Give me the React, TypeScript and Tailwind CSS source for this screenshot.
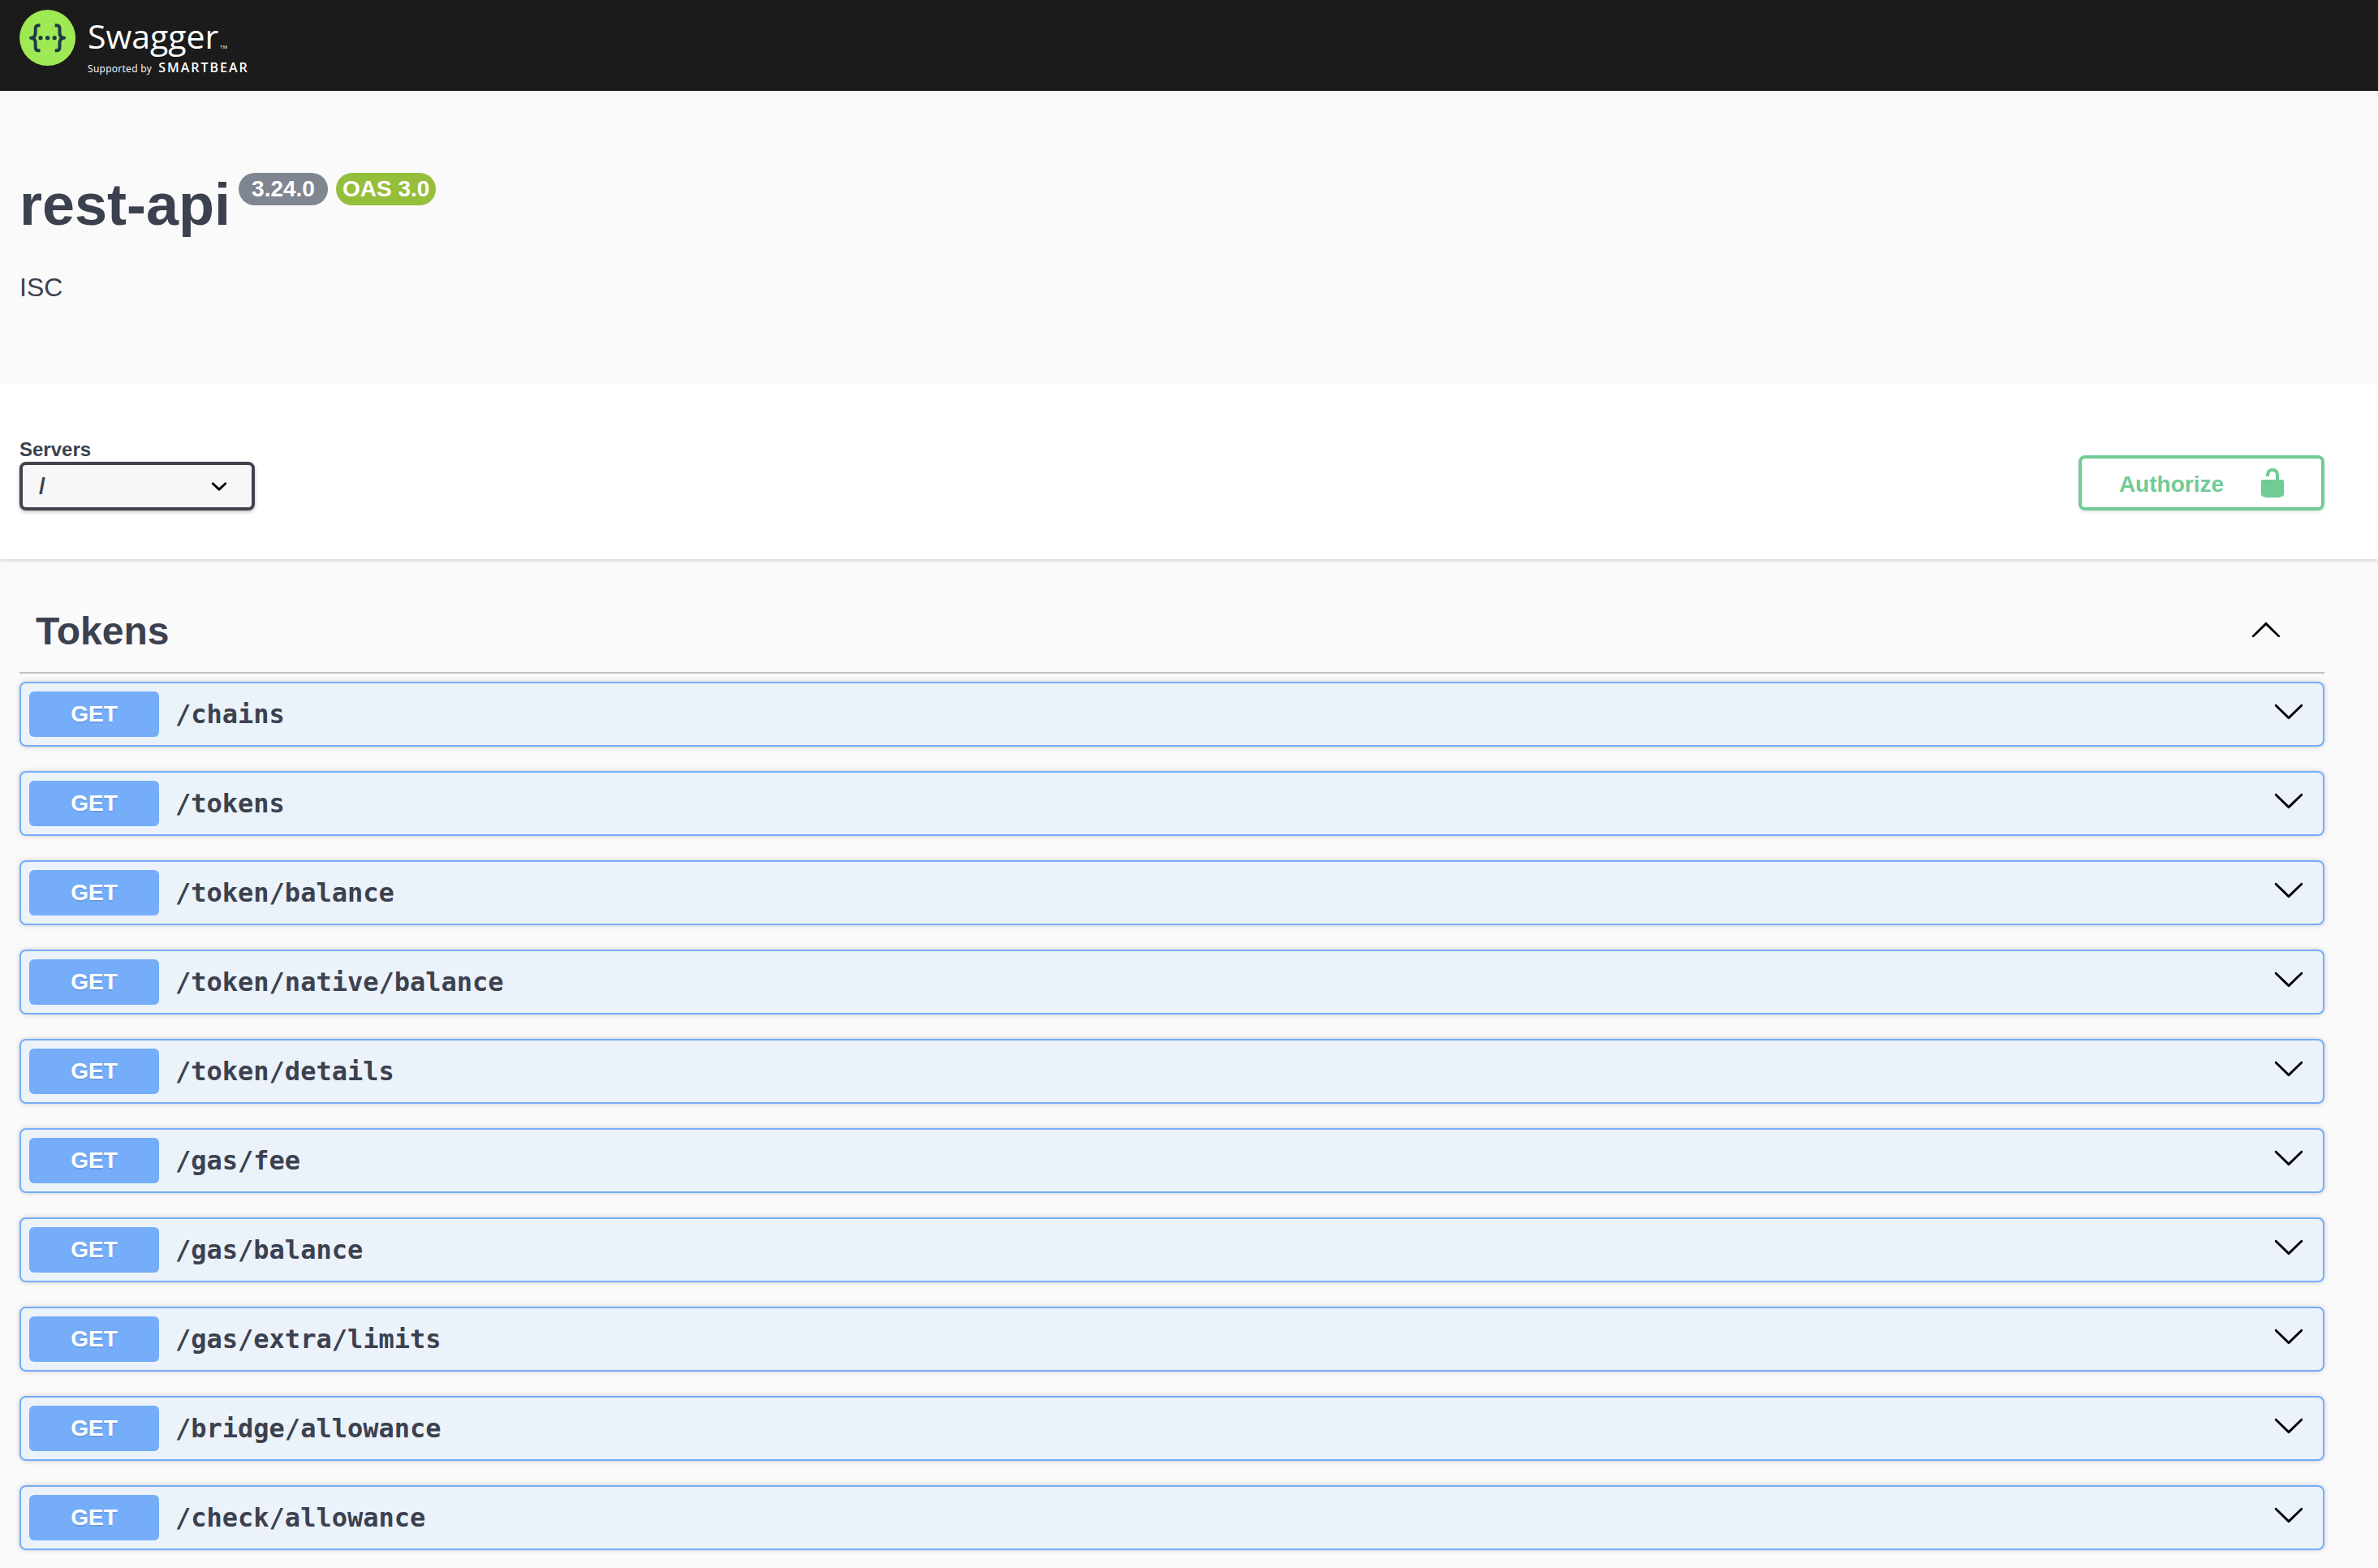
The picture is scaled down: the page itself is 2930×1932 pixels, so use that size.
import { useState } from "react";

type Operation = { method: string; path: string };

const operations: Operation[] = [
  { method: "GET", path: "/chains" },
  { method: "GET", path: "/tokens" },
  { method: "GET", path: "/token/balance" },
  { method: "GET", path: "/token/native/balance" },
  { method: "GET", path: "/token/details" },
  { method: "GET", path: "/gas/fee" },
  { method: "GET", path: "/gas/balance" },
  { method: "GET", path: "/gas/extra/limits" },
  { method: "GET", path: "/bridge/allowance" },
  { method: "GET", path: "/check/allowance" },
];

function ArrowDown({ className }: { className?: string }) {
  return (
    <svg viewBox="0 0 20 20" className={className} aria-hidden="true">
      <path d="M17.418 6.109c.272-.268.709-.268.979 0s.271.701 0 .969l-7.908 7.83c-.27.268-.707.268-.979 0l-7.908-7.83c-.27-.268-.27-.701 0-.969.271-.268.709-.268.979 0L10 13.25l7.418-7.141z" />
    </svg>
  );
}

function ArrowUp({ className }: { className?: string }) {
  return (
    <svg viewBox="0 0 20 20" className={className} aria-hidden="true">
      <path d="M17.418 14.908c.272.268.709.268.979 0s.271-.701 0-.969l-7.908-7.83c-.27-.268-.707-.268-.979 0l-7.908 7.83c-.27.268-.27.701 0 .969.271.268.709.268.979 0L10 7.767l7.418 7.141z" />
    </svg>
  );
}

function UnlockedIcon() {
  return (
    <svg viewBox="0 0 20 20" className="size-10 fill-current" aria-hidden="true">
      <path d="M15.8 8H14V5.6C14 2.703 12.665 1 10 1 7.334 1 6 2.703 6 5.6V6h2v-.801C8 3.754 8.797 3 10 3c1.203 0 2 .754 2 2.199V8H4c-.553 0-1 .646-1 1.199V17c0 .549.428 1.139.951 1.307l1.197.387C5.672 18.861 6.55 19 7.1 19h5.8c.549 0 1.428-.139 1.951-.307l1.196-.387c.524-.167.953-.757.953-1.306V9.199C17 8.646 16.352 8 15.8 8z" />
    </svg>
  );
}

function LogoMark() {
  return (
    <svg viewBox="0 0 70 70" className="size-[70px]" aria-hidden="true">
      <circle cx="34.6" cy="34.6" r="34.5" fill="#9fe954" />
      <g fill="none" stroke="#1f3b4a" strokeWidth="4" strokeLinejoin="round">
        <path d="M25.5 19.2h-2q-3.8 0-3.8 4v5.2q0 6-5.7 6.3q5.7 .3 5.7 6.3v5.2q0 4 3.8 4h2" />
        <path d="M43.7 19.2h2q3.8 0 3.8 4v5.2q0 6 5.7 6.3q-5.7 .3-5.7 6.3v5.2q0 4-3.8 4h-2" />
      </g>
      <g fill="#1f3b4a">
        <circle cx="26" cy="34.7" r="2.6" />
        <circle cx="34.6" cy="34.7" r="2.6" />
        <circle cx="43.2" cy="34.7" r="2.6" />
      </g>
    </svg>
  );
}

function Topbar() {
  return (
    <header className="flex h-28 items-start bg-[#1b1b1b] px-6 pt-3">
      <a
        href="#top"
        aria-label="Swagger"
        className="flex gap-3.5 font-['Open_Sans',sans-serif] text-white"
      >
        <LogoMark />
        <span className="flex flex-col">
          <span className="flex items-end gap-0.5 pt-1 pb-0.5">
            <span className="text-[41px] leading-[56px]">Swagger</span>
            <span className="pb-2.5 text-[6px] leading-[8px]">TM</span>
          </span>
          <span className="flex items-baseline gap-2">
            <span className="text-[12px] leading-[18px] tracking-wide">Supported by</span>
            <span className="text-[16px] leading-[18px] font-semibold tracking-[2px]">
              SMARTBEAR
            </span>
          </span>
        </span>
      </a>
    </header>
  );
}

function ApiInfo() {
  return (
    <section className="pt-[100px] pr-[66px] pb-[98px] pl-6">
      <div className="flex items-start gap-2.5">
        <h1 className="text-[72px] leading-[80px] font-bold">rest-api</h1>
        <span className="mt-px rounded-full bg-[#7f8591] px-4 text-[28px] leading-[40px] font-bold text-white">
          3.24.0
        </span>
        <span className="mt-px rounded-full bg-[#95be3b] px-2 text-[28px] leading-[40px] font-bold text-white">
          OAS 3.0
        </span>
      </div>
      <p className="mt-[42px] text-[32px] leading-[40px]">ISC</p>
    </section>
  );
}

function SchemeBar() {
  return (
    <section className="flex items-end justify-between bg-white pt-[68px] pr-[66px] pb-[60px] pl-6 shadow-[0_2px_4px_rgba(0,0,0,0.15)]">
      <div className="flex flex-col">
        <label htmlFor="servers" className="pb-0.5 text-[24px] leading-[27px] font-bold">
          Servers
        </label>
        <div className="relative">
          <select
            id="servers"
            className="block h-[60px] w-[290px] appearance-none rounded-lg border-4 border-[#41444e] bg-[#f7f7f7] px-5 text-[28px] leading-[32px] font-bold shadow-[0_2px_4px_rgba(0,0,0,0.25)]"
          >
            <option>/</option>
          </select>
          <svg
            viewBox="0 0 20 20"
            className="pointer-events-none absolute top-2.5 right-6 size-10"
            aria-hidden="true"
          >
            <path d="M13.418 7.859a.695.695 0 01.978 0 .68.68 0 010 .969l-3.908 3.83a.697.697 0 01-.979 0l-3.908-3.83a.68.68 0 010-.969.695.695 0 01.978 0L10 11l3.418-3.141z" />
          </svg>
        </div>
      </div>
      <button
        type="button"
        className="flex h-[68px] items-center gap-10 rounded-lg border-4 border-[#70cb95] pr-10 pl-[46px] text-[28px] leading-[32px] font-bold text-[#70cb95] shadow-[0_2px_4px_rgba(0,0,0,0.1)]"
      >
        <span className="pt-1">Authorize</span>
        <UnlockedIcon />
      </button>
    </section>
  );
}

function OperationRow({ method, path }: Operation) {
  return (
    <li>
      <button
        type="button"
        className="flex h-20 w-full items-center rounded-lg border-2 border-[#75adf9] bg-[#ebf2fa] pr-[22px] pl-2.5 text-left shadow-[0_0_6px_rgba(0,0,0,0.19)]"
      >
        <span className="w-40 rounded-md bg-[#75adf9] text-center text-[28px] leading-[56px] font-bold text-white text-shadow-[0_2px_0_rgba(0,0,0,0.1)]">
          {method}
        </span>
        <span className="flex-1 pl-5 font-['DejaVu_Sans_Mono',monospace] text-[32px] leading-[40px] font-bold">
          {path}
        </span>
        <ArrowDown className="mb-2 size-10 fill-black" />
      </button>
    </li>
  );
}

export default function App() {
  const [open, setOpen] = useState(true);

  return (
    <div
      id="top"
      className="min-h-screen bg-[#fafafa] font-['Liberation_Sans',Arial,sans-serif] text-[#3c414f]"
    >
      <Topbar />
      <main>
        <ApiInfo />
        <SchemeBar />
        <section className="pt-[60px] pr-[66px] pb-[22px] pl-6">
          <h2 className="border-b-2 border-[#3c414f]/30">
            <button
              type="button"
              aria-expanded={open}
              onClick={() => setOpen(!open)}
              className="flex w-full items-center justify-between pr-[52px] pb-[21px] pl-5 text-[48px] leading-[58px] font-bold"
            >
              Tokens
              {open ? (
                <ArrowUp className="mb-1.5 size-10 fill-black" />
              ) : (
                <ArrowDown className="mb-1.5 size-10 fill-black" />
              )}
            </button>
          </h2>
          {open && (
            <ul className="flex flex-col gap-[30px] pt-2.5">
              {operations.map((op) => (
                <OperationRow key={op.path} {...op} />
              ))}
            </ul>
          )}
        </section>
      </main>
    </div>
  );
}
